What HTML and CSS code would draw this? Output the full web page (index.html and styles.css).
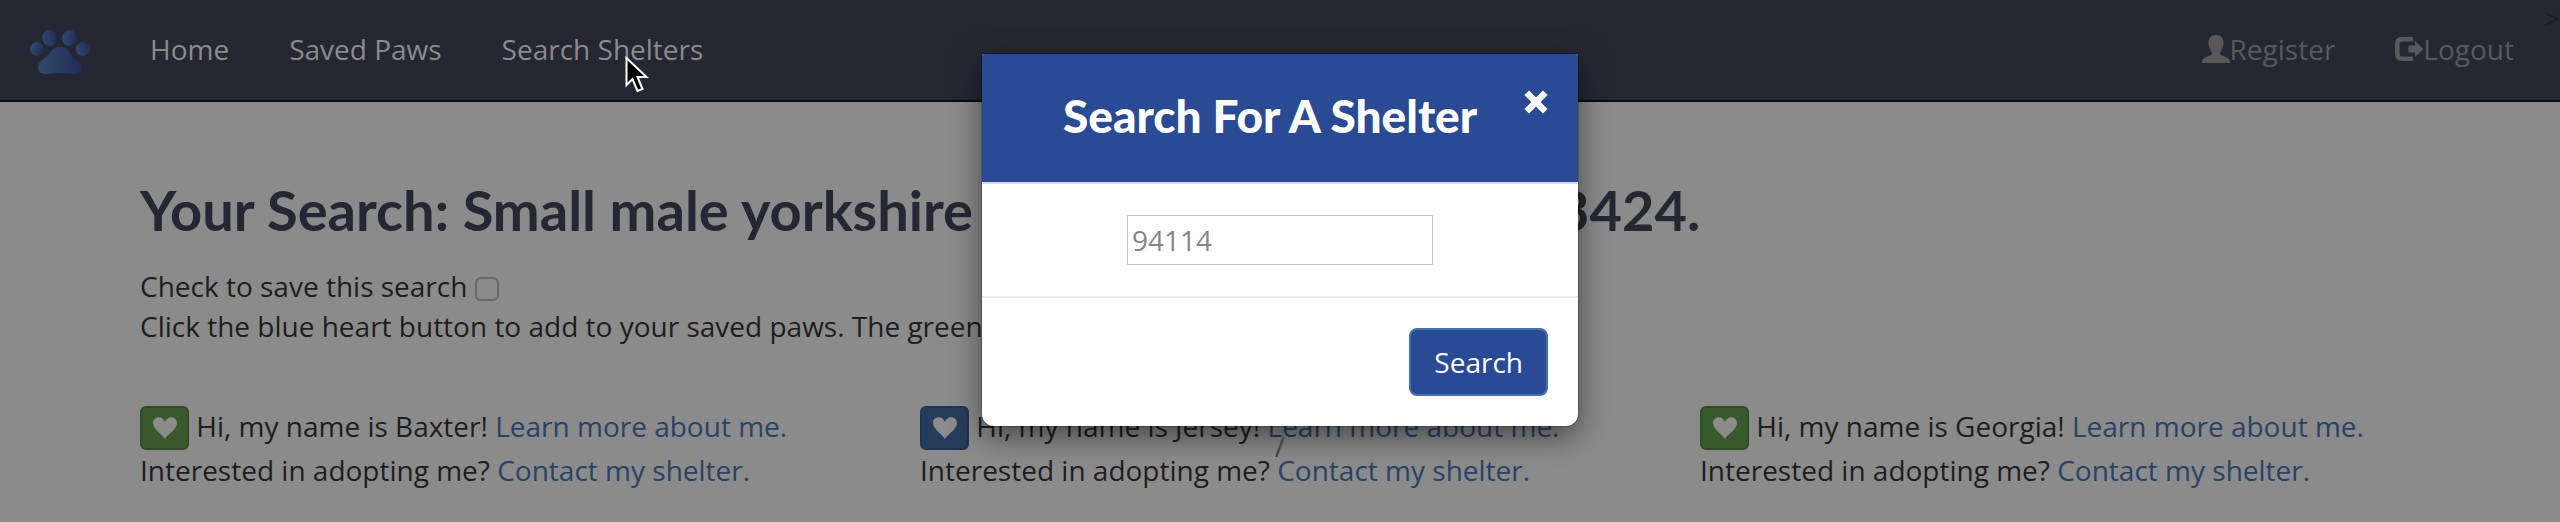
FILE: index.html
```html
<!DOCTYPE html>
<html lang="en">
<head>
<meta charset="utf-8">
<title>Search Shelters</title>
<link rel="stylesheet" href="styles.css">
</head>
<body>
<nav class="navbar">
  <a class="brand" href="#" aria-label="Start page">
    <svg class="paw" viewBox="0 0 60 46">
      <defs>
        <linearGradient id="fur" x1="0" x2="1" y1="0" y2="0"><stop offset="0" stop-color="#34496a"/><stop offset="1" stop-color="#1f2d59"/></linearGradient>
      </defs>
      <g fill="url(#fur)">
        <ellipse cx="7" cy="19" rx="7" ry="7" transform="rotate(20 7 19)"/>
        <ellipse cx="19.500" cy="8" rx="7.300" ry="8" transform="rotate(-8 19.500 8)"/>
        <ellipse cx="39.500" cy="8" rx="7.300" ry="8" transform="rotate(12 39.500 8)"/>
        <ellipse cx="53" cy="19" rx="7" ry="7" transform="rotate(-20 53 19)"/>
        <path d="M30 17c-8 0-10 6-14 10-5 4-8 6-8 11 0 4 3 6 8 6 6 0 8-1 14-1s9 1 14 1c6 0 8-3 7-7-1-5-5-7-8-10-4-4-5-10-13-10z"/>
      </g>
    </svg>
  </a>
  <a class="nav-link" href="#">Home</a>
  <a class="nav-link" href="#">Saved Paws</a>
  <a class="nav-link" href="#">Search Shelters</a>
  <div class="account">
    <a class="nav-link muted" href="#"><svg class="icon" viewBox="0 0 28 28"><path fill="currentColor" d="M14 0c5 0 7.500 3 7.500 8 0 4-1.500 7-3.500 9v2c2 2 9 3 10 7v2H0v-2c1-4 8-5 10-7v-2c-2-2-3.500-5-3.500-9 0-5 2.500-8 7.500-8z"/></svg>Register</a>
    <a class="nav-link muted" href="#"><svg class="icon" viewBox="0 0 28 28"><path fill="none" stroke="currentColor" stroke-width="4.500" d="M18 4.200H7Q2.300 4.200 2.300 9v10q0 4.800 4.700 4.800h11"/><path fill="currentColor" d="M13.500 10.500H20V6l8.500 8-8.500 8v-4.500h-6.500z"/></svg>Logout</a>
  </div>
  <span class="stray">&gt;</span>
</nav>

<main class="container">
  <h1 class="heading">Your Search: Small male yorkshire terriers near zip code 93424.</h1>
  <p class="line"><label for="save">Check to save this search</label> <input class="check" id="save" type="checkbox"></p>
  <p class="line">Click the blue heart button to add to your saved paws. The green heart means it is saved.</p>
  <div class="pets">
    <section class="pet">
      <p class="intro"><button class="heart saved" aria-label="Saved"><svg viewBox="0 0 24 22"><path fill="currentColor" d="M12 22C9 17 0 12 0 6c0-7 10-8 12-1 2-7 12-6 12 1 0 6-9 11-12 16z"/></svg></button> Hi, my name is Baxter! <a class="link" href="#">Learn more about me.</a></p>
      <p class="contact">Interested in adopting me? <a class="link" href="#">Contact my shelter.</a></p>
    </section>
    <section class="pet">
      <p class="intro"><button class="heart" aria-label="Save"><svg viewBox="0 0 24 22"><path fill="currentColor" d="M12 22C9 17 0 12 0 6c0-7 10-8 12-1 2-7 12-6 12 1 0 6-9 11-12 16z"/></svg></button> Hi, my name is Jersey! <a class="link" href="#">Learn more about me.</a></p>
      <p class="contact">Interested in adopting me? <a class="link" href="#">Contact my shelter.</a></p>
    </section>
    <section class="pet">
      <p class="intro"><button class="heart saved" aria-label="Saved"><svg viewBox="0 0 24 22"><path fill="currentColor" d="M12 22C9 17 0 12 0 6c0-7 10-8 12-1 2-7 12-6 12 1 0 6-9 11-12 16z"/></svg></button> Hi, my name is Georgia! <a class="link" href="#">Learn more about me.</a></p>
      <p class="contact">Interested in adopting me? <a class="link" href="#">Contact my shelter.</a></p>
    </section>
  </div>
</main>

<div class="overlay">
  <form class="modal" role="dialog" aria-labelledby="title">
    <header class="modal-head">
      <h2 class="modal-title" id="title">Search For A Shelter</h2>
      <button class="close" type="button" aria-label="Close"><svg viewBox="0 0 22 22"><path stroke="currentColor" stroke-width="6" d="M2.500 2.500l17 17M19.500 2.500l-17 17"/></svg></button>
    </header>
    <div class="modal-body"><input class="zip" type="text" placeholder="94114" aria-label="Zip code"></div>
    <footer class="modal-foot"><button class="submit" type="button">Search</button></footer>
  </form>
  <span class="slash">/</span>
</div>
<svg class="cursor" viewBox="0 0 24 38"><path fill="#000" stroke="#fff" stroke-width="2" d="M1.500 2v27l6-6 5 12 5-2-5-12h9z"/></svg>
</body>
</html>
```
FILE: styles.css
```css
* { box-sizing: border-box; }
body {
  margin: 0;
  background: #8b8b8b;
  color: #1e1e1e;
  font: 28px/40px "Open Sans", sans-serif;
  overflow: hidden;
}
p, h1, h2 { margin: 0; }
button { font: inherit; }

.navbar {
  position: relative;
  display: flex;
  align-items: center;
  gap: 60px;
  height: 102px;
  padding: 0 46px 0 30px;
  background: #252733;
  border-bottom: 2px solid #0b0c12;
}
.brand { display: flex; padding-top: 6px; }
.paw { width: 60px; height: 46px; }
.nav-link {
  display: flex;
  align-items: center;
  padding-bottom: 2px;
  color: #8b8b8b;
  text-decoration: none;
}
.muted { color: #595959; }
.account { display: flex; gap: 60px; margin-left: auto; }
.icon { width: 28px; height: 28px; }
.stray { position: absolute; top: -2px; right: 0; color: #1e1e1e; }

.container { padding: 72px 80px 0 140px; }
.heading {
  margin-bottom: 20px;
  color: #252733;
  font: 700 56px/72px Lato, sans-serif;
  white-space: nowrap;
}
.line { white-space: nowrap; }
.check {
  appearance: none;
  width: 24px;
  height: 24px;
  margin: 0;
  border: 2px solid #686868;
  border-radius: 6px;
  vertical-align: -4px;
}
.pets {
  display: grid;
  grid-template-columns: repeat(3, 1fr);
  margin-top: 60px;
}
.intro, .contact { white-space: nowrap; }
.heart {
  display: inline-flex;
  justify-content: center;
  width: 49px;
  height: 44px;
  padding: 9px 0;
  border: 2px solid #1f3453;
  border-radius: 6px;
  background: #263c5c;
  color: #8b8b8b;
  vertical-align: top;
}
.saved { border-color: #304e24; background: #38592b; }
.heart svg { width: 24px; height: 22px; }
.link { color: #2a4264; text-decoration: none; }

.overlay {
  position: absolute;
  inset: 0;
  display: flex;
  flex-direction: column;
  align-items: center;
  padding-top: 54px;
}
.modal {
  width: 596px;
  overflow: hidden;
  border-radius: 2px 2px 12px 12px;
  background: #fff;
  box-shadow: 0 10px 30px rgba(0, 0, 0, 0.5), 0 0 0 1px rgba(0, 0, 0, 0.2);
}
.modal-head {
  position: relative;
  padding: 30px 50px 34px 30px;
  border-bottom: 2px solid #d4dced;
  background: #2a4b94;
  color: #fff;
  text-align: center;
}
.modal-title { font: 900 46px/64px Lato, sans-serif; }
.close {
  position: absolute;
  top: 36px;
  right: 30px;
  padding: 0;
  border: 0;
  background: none;
  color: #fff;
}
.close svg { display: block; width: 24px; height: 24px; }
.modal-body { display: flex; justify-content: center; padding: 31px 30px; }
.zip {
  width: 306px;
  height: 50px;
  padding: 2px 4px;
  border: 1px solid #c4c4c4;
  font: inherit;
}
.zip::placeholder { color: #858585; opacity: 1; }
.modal-foot {
  display: flex;
  justify-content: flex-end;
  padding: 30px;
  border-top: 2px solid #ebebeb;
}
.submit {
  height: 68px;
  padding: 0 23px;
  border: 2px solid #4472b0;
  border-radius: 8px;
  background: #2a4b94;
  color: #fff;
}
.slash { color: #444; }
.cursor { position: absolute; left: 625px; top: 56px; width: 24px; height: 38px; }
```
